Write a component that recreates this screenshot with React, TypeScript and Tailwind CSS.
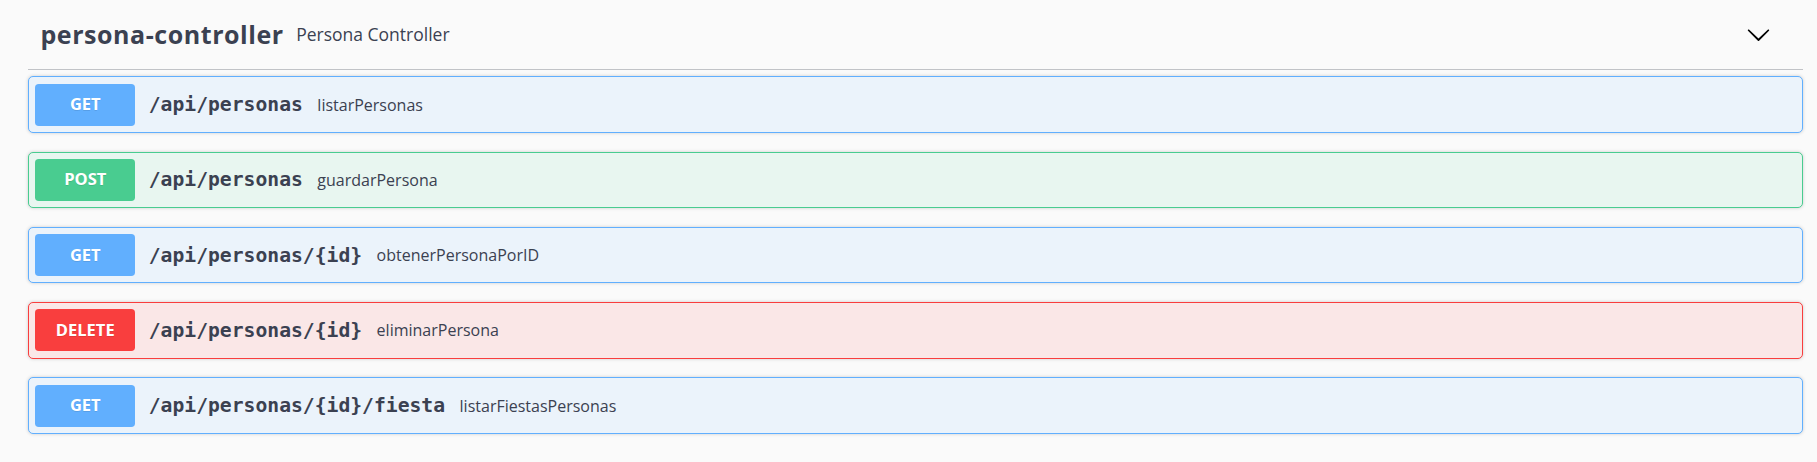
import React from "react";

type Op = {
  method: "GET" | "POST" | "DELETE";
  path: string;
  summary: string;
};

const ops: Op[] = [
  { method: "GET", path: "/api/personas", summary: "listarPersonas" },
  { method: "POST", path: "/api/personas", summary: "guardarPersona" },
  { method: "GET", path: "/api/personas/{id}", summary: "obtenerPersonaPorID" },
  { method: "DELETE", path: "/api/personas/{id}", summary: "eliminarPersona" },
  { method: "GET", path: "/api/personas/{id}/fiesta", summary: "listarFiestasPersonas" },
];

const blockStyles: Record<Op["method"], { block: string; badge: string }> = {
  GET: {
    block: "bg-[#ebf3fb] border-[#61affe]",
    badge: "bg-[#61affe]",
  },
  POST: {
    block: "bg-[#e8f6f0] border-[#49cc90]",
    badge: "bg-[#49cc90]",
  },
  DELETE: {
    block: "bg-[#fae7e7] border-[#f93e3e]",
    badge: "bg-[#f93e3e]",
  },
};

function Chevron() {
  return (
    <svg
      className="mr-[32.5px] h-[25px] w-[25px] shrink-0"
      viewBox="0 0 20 20"
      aria-hidden="true"
    >
      <path
        fill="#000"
        d="M17.418 6.109c.272-.268.709-.268.979 0s.271.701 0 .969l-7.908 7.83c-.27.268-.707.268-.979 0l-7.908-7.83c-.27-.268-.27-.701 0-.969.271-.268.709-.268.979 0L10 13.25l7.418-7.141z"
      />
    </svg>
  );
}

function OpBlock({ op }: { op: Op }) {
  const s = blockStyles[op.method];
  return (
    <div
      className={`flex h-[56.5px] items-center rounded-[5px] border px-[6.25px] shadow-[0_0_3.75px_rgba(0,0,0,0.19)] ${s.block}`}
    >
      <div
        className={`flex h-[42px] w-[100px] shrink-0 items-center justify-center rounded-[3.75px] font-['Open_Sans',sans-serif] text-[16.5px] font-bold text-white [text-shadow:0_1px_0_rgba(0,0,0,0.1)] ${s.badge}`}
      >
        {op.method}
      </div>
      <span className="pl-[13.5px] pr-[14.5px] pt-[1px] font-['DejaVu_Sans_Mono',monospace] text-[19.7px] font-bold text-[#3b4151]">
        {op.path}
      </span>
      <span className="font-['Open_Sans',sans-serif] text-[16px] text-[#3b4151]">
        {op.summary}
      </span>
    </div>
  );
}

export default function App() {
  return (
    <div className="min-h-screen bg-[#fafafa] pl-[28px] pr-[14px]">
      <div className="flex h-[70px] items-center border-b border-[#c1c3c7] pl-[12.5px]">
        <span className="font-['Open_Sans',sans-serif] text-[25px] font-bold tracking-[0.55px] text-[#3b4151]">
          persona-controller
        </span>
        <small className="flex-1 px-[12.5px] font-['Open_Sans',sans-serif] text-[17.5px] font-normal text-[#3b4151]">
          Persona Controller
        </small>
        <Chevron />
      </div>
      <div className="mt-[6.25px] flex flex-col gap-[18.75px]">
        {ops.map((op, i) => (
          <OpBlock key={i} op={op} />
        ))}
      </div>
    </div>
  );
}
